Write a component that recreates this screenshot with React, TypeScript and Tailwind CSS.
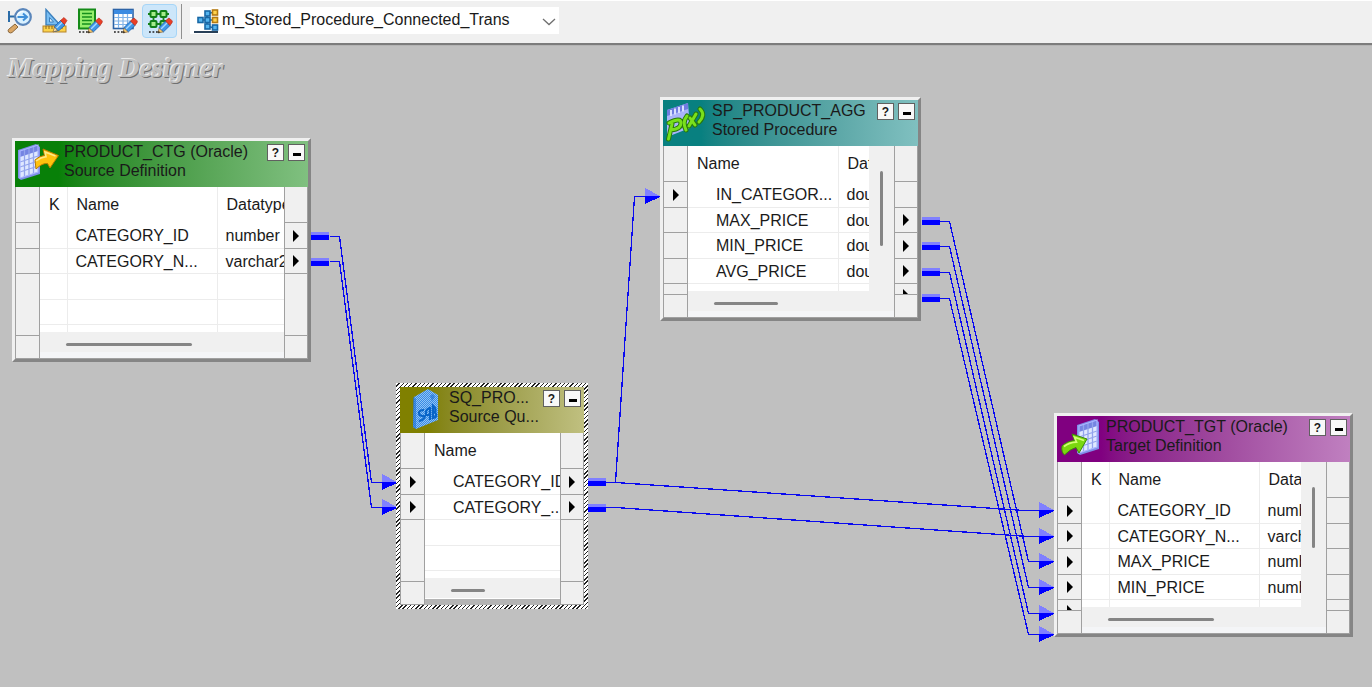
import type { ReactNode } from "react";

type Field = { name: string; type?: string; input?: boolean; output?: boolean };

type NodeProps = {
  title: string;
  kind: string;
  place: string;
  header: string;
  icon: ReactNode;
  fields: Field[];
  hasKey?: boolean;
  typeLabel?: string;
  selected?: boolean;
  indent?: boolean;
  scrollX: string;
  scrollY?: string;
  stubIn?: boolean;
  stubOut?: boolean;
};

function Pencil() {
  return (
    <g>
      <path d="M2 24h1.800M5.500 24h1.800M9 24h1.800" stroke="#222" strokeWidth="1.600" />
      <path d="M11 25l1.200-5.500 4.300 4.300z" fill="#f3c56b" stroke="#7a5320" strokeWidth=".6" />
      <path d="M11 25l.6-2.200 1.600 1.600z" fill="#222" />
      <path d="M12 19.500l6.500-6.500 4.500 4.500-6.500 6.300z" fill="#3f96e6" stroke="#1c5fae" strokeWidth=".8" />
      <path d="M14 21l6.500-6.500" stroke="#a6d6ff" strokeWidth="1.400" />
      <path d="M18.500 13l2.500-2.500q1-.8 2 .2l2 2q.8 1 0 2L23 17.500z" fill="#ea3f26" stroke="#a82315" strokeWidth=".6" />
    </g>
  );
}

function Svg({ children }: { children: ReactNode }) {
  return (
    <svg viewBox="0 0 26 26" className="size-[26px]" fill="none" aria-hidden="true">
      {children}
    </svg>
  );
}

const tools: { label: string; active?: boolean; icon: ReactNode }[] = [
  {
    label: "Source Analyzer",
    icon: (
      <Svg>
        <path d="M2 3v11M2 8.500h6" stroke="#2a6ca8" strokeWidth="2" />
        <path d="M1.500 21.500l6.500-5.500 3 3-6 5.500q-1.500 1-3.200-.2-1.300-1.500-.3-2.800z" fill="#dba766" stroke="#8a673c" strokeWidth="1" />
        <circle cx="16" cy="9" r="7.800" fill="#d9f1ff" stroke="#5a86bb" strokeWidth="2.200" />
        <path d="M9.500 8.500q2-5 7-5" stroke="#fff" strokeWidth="1.200" />
        <path d="M10.500 9h9M16 5.500L20 9l-4 3.500" stroke="#3f8fd8" strokeWidth="2" />
      </Svg>
    ),
  },
  {
    label: "Target Designer",
    icon: (
      <Svg>
        <path d="M4 1.500v15.500h14z" fill="#78bdf2" stroke="#3c80bd" strokeWidth="1.400" />
        <path d="M7.500 9.500v4.500h4z" fill="#e6f4ff" stroke="#3c80bd" />
        <rect x="1" y="18" width="23" height="6" fill="#fbd24a" stroke="#b5842a" />
        <path d="M4 18v3M7 18v3M10 18v3M20 18v3" stroke="#8b631d" />
        <g transform="translate(0 -1)">
          <path d="M12.500 19.500l6-6 4.500 4.500-6 5.500-4.500 1z" fill="#3f96e6" stroke="#1c5fae" strokeWidth=".8" />
          <path d="M14.500 21l6-6" stroke="#a6d6ff" strokeWidth="1.400" />
          <path d="M11 25l1.500-5 3 3.500z" fill="#f3dfae" stroke="#7a5320" strokeWidth=".6" />
          <path d="M18.500 13.500l3.500-3 3 3-2.500 4z" fill="#ea3f26" stroke="#a82315" strokeWidth=".6" />
        </g>
      </Svg>
    ),
  },
  {
    label: "Transformation Developer",
    icon: (
      <Svg>
        <rect x="2" y="1.500" width="16" height="19" fill="#96ee6c" stroke="#158b18" strokeWidth="2" />
        <path d="M5 5.500h10M5 9h10M5 12.500h10M5 16h9" stroke="#168f1c" strokeWidth="1.700" />
        <Pencil />
      </Svg>
    ),
  },
  {
    label: "Mapplet Designer",
    icon: (
      <Svg>
        <rect x="1.500" y="1.500" width="19.500" height="19" fill="#fff" stroke="#2d63a6" strokeWidth="1.600" />
        <path d="M2 2h18.500v4H2z" fill="#3b8be2" />
        <path d="M2 9.500h18M2 13h18M2 16.500h18M6.500 6v14M11 6v14M15.500 6v14" stroke="#82b4e8" strokeWidth="1.200" />
        <Pencil />
      </Svg>
    ),
  },
  {
    label: "Mapping Designer",
    active: true,
    icon: (
      <Svg>
        <path d="M1 6h21M1 16h21M6.500 6v12M16.500 5v12" stroke="#16831b" strokeWidth="1.800" />
        <g fill="#a5ec8a" stroke="#128018" strokeWidth="2">
          <rect x="3.500" y="3" width="6" height="6" rx="1" />
          <rect x="13.500" y="3" width="6" height="6" rx="1" />
          <rect x="3.500" y="13" width="6" height="6" rx="1" />
          <rect x="13.500" y="13" width="6" height="6" rx="1" />
        </g>
        <Pencil />
      </Svg>
    ),
  },
];

function SheetGrid() {
  return (
    <g>
      <path d="M3 9L21 3l4 3v27L6 39l-3-2z" fill="#7f8ee8" />
      <path d="M5 10l18-6v27L5 37z" fill="#dfe8ff" />
      <path d="M5 10l18-6v6L5 16z" fill="#7584e2" />
      <path d="M5 21l18-6M5 26l18-6M5 31l18-6M9.500 9v26.500M14 7v27M18.500 5.500V33" stroke="#93a4ec" strokeWidth="1.300" />
      <path d="M5 10l18-6v27L5 37z" fill="none" stroke="#a9b5ff" strokeWidth="1.200" />
    </g>
  );
}

const sourceIcon = (
  <svg viewBox="0 0 45 44" className="h-[44px] w-[45px]" aria-hidden="true">
    <SheetGrid />
    <path d="M20 19q4-4 9.500-4.500L28 8l15.500 6.500L35 27l-2.500-4.500Q27 22 21 28z" fill="#ffc20d" stroke="#b97a00" strokeWidth="1" />
    <path d="M21 20q5-4 10-4.300l-1-4.700 10.500 4" fill="none" stroke="#ffe987" strokeWidth="1.600" />
  </svg>
);

const targetIcon = (
  <svg viewBox="0 0 45 44" className="h-[44px] w-[45px]" aria-hidden="true">
    <g transform="translate(17 0)">
      <SheetGrid />
    </g>
    <path d="M5 30q5-5 12.500-5.500L15 18l15 5-8 14-3-5.500Q13 33 7.500 39 4 36 5 30z" fill="#7ad80f" stroke="#3c8a0a" strokeWidth="1" />
    <path d="M7 30.500q5-4 12.500-4.300l-2-5 9.500 3.300" fill="none" stroke="#d4ff76" strokeWidth="1.700" />
  </svg>
);

const procedureIcon = (
  <svg viewBox="0 0 45 44" className="h-[44px] w-[45px]" aria-hidden="true">
    <path d="M4 10l21-7 2 25-23 9z" fill="#a9b3fa" />
    <path d="M4 10l21-7v6L4 16z" fill="#6f7ce0" />
    <path d="M8 10v6M12 8.500v6M16 7v6M20 5.500v6" stroke="#d8dfff" strokeWidth="2" />
    <g fill="none" strokeLinecap="round" strokeLinejoin="round">
      <path
        d="M5.500 39L9 24M6 23q12-6 12 0 0 6-10 7M24 16q-5 6-1 14M37 9q6 6-1 13M27 18l5 7M33 14l-7 12"
        stroke="#27780c"
        strokeWidth="5"
      />
      <path
        d="M5.500 39L9 24M6 23q12-6 12 0 0 6-10 7M24 16q-5 6-1 14M37 9q6 6-1 13M27 18l5 7M33 14l-7 12"
        stroke="#79e01c"
        strokeWidth="3"
      />
    </g>
  </svg>
);

const qualifierIcon = (
  <svg viewBox="0 0 45 44" className="h-[44px] w-[45px]" aria-hidden="true">
    <defs>
      <pattern id="dither" width="2" height="2" patternUnits="userSpaceOnUse">
        <rect width="2" height="2" fill="#8fc4f6" />
        <rect width="1" height="1" fill="#3a8ae4" />
        <rect x="1" y="1" width="1" height="1" fill="#3a8ae4" />
      </pattern>
    </defs>
    <path d="M14 10L28 2l10 6v25L16 42l-3-2z" fill="url(#dither)" />
    <path d="M13 10l3 2v30l-3-2zM30 9l3-2 2 3-3 4z" fill="#1d72d4" opacity=".6" />
    <g fill="none" stroke="#0864c8" strokeWidth="2.200">
      <path d="M24 23q-5 0-5 3t4 3-1 4l-3 1M30 21q-5 1-4 7h4v-7zM30 20v13M33 19v12q4-1 3-4t-3-1q4-2 2-5-1-1-2-2z" />
    </g>
  </svg>
);

const triangle = "h-0 w-0 shrink-0 border-y-[6px] border-l-[6px] border-y-transparent border-l-black";

function Ports({ fields, side, stub }: { fields: Field[]; side: "in" | "out"; stub?: boolean }) {
  return (
    <div className="flex flex-col border-x border-[#a0a0a0] bg-[#f0f0f0]">
      <div className="h-[35px] shrink-0" />
      {fields.map((f) => (
        <div
          key={f.name}
          className="flex shrink-0 items-center justify-center border-t border-[#a0a0a0] even:h-[26px] odd:h-[25px]"
        >
          {(side === "in" ? f.input : f.output) && <span className={triangle} />}
        </div>
      ))}
      <div className="flex min-h-0 flex-1 items-start justify-center overflow-hidden border-t border-[#a0a0a0] pt-[5px]">
        {stub && <span className={triangle} />}
      </div>
      <div className="h-[24px] shrink-0 border-y border-[#a0a0a0]" />
    </div>
  );
}

function MappingNode(p: NodeProps) {
  const blanks = Math.max(0, 4 - p.fields.length);
  const rows: (Field | null)[] = [...p.fields, ...Array.from({ length: blanks }, () => null)];
  const line = "border-[#ececec]";
  return (
    <section
      aria-label={p.title}
      className={`absolute ${p.place} ${
        p.selected
          ? "bg-[repeating-linear-gradient(135deg,#fff_0px,#fff_2px,#222_2px,#222_3px)] p-[4px]"
          : "border-[3px] border-t-[#f0f0f0] border-r-[#858585] border-b-[#858585] border-l-[#f0f0f0]"
      }`}
    >
      <header className={`flex h-[46px] overflow-hidden bg-linear-to-r from-15% ${p.header}`}>
        <div className="w-[49px] shrink-0">{p.icon}</div>
        <div className="min-w-0 flex-1 pt-px leading-[19px] whitespace-nowrap">
          <h2>{p.title}</h2>
          <p>{p.kind}</p>
        </div>
        <div className="flex gap-[4px] pt-[3px] pr-[3px]">
          <button
            aria-label="Help"
            className="flex size-[17px] items-center justify-center border border-[#606060] bg-[#f8f8f8] text-[12px] leading-none font-bold"
          >
            ?
          </button>
          <button
            aria-label="Minimize"
            className="flex size-[17px] items-end justify-center border border-[#606060] bg-[#f8f8f8] pb-[4px]"
          >
            <span className="h-[3px] w-[8px] bg-black" />
          </button>
        </div>
      </header>
      <div className="grid grid-cols-[25px_minmax(0,1fr)_24px] grid-rows-[172px] bg-[#f0f0f0]">
        <Ports fields={p.fields} side="in" stub={p.stubIn} />
        <div className="flex min-w-0 flex-col">
          <div className="flex h-[145px] min-w-0">
            <div className="min-w-0 flex-1 overflow-hidden bg-white">
              <table className="w-[300px] table-fixed border-collapse text-left whitespace-nowrap">
                <thead>
                  <tr className="h-[35px]">
                    {p.hasKey && <th className={`w-[27px] border-r ${line} pl-[9px] font-normal`}>K</th>}
                    <th className={`${p.selected ? "" : "w-[150px] border-r"} ${line} pl-[9px] font-normal`}>Name</th>
                    {p.typeLabel && <th className="pl-[9px] font-normal">{p.typeLabel}</th>}
                  </tr>
                </thead>
                <tbody>
                  {rows.map((f, i) => (
                    <tr key={i} className={`border-b ${line} odd:h-[26px] even:h-[25px]`}>
                      {p.hasKey && <td className={`border-r ${line}`} />}
                      <td
                        className={`overflow-hidden ${p.selected ? "" : "border-r"} ${line} ${p.indent ? "pl-[28px]" : "pl-[8px]"} pt-[2px]`}
                      >
                        {f?.name}
                      </td>
                      {p.typeLabel && <td className="pt-[2px] pl-[8px]">{f?.type}</td>}
                    </tr>
                  ))}
                  <tr className="h-[25px]">
                    {p.hasKey && <td className={`border-r ${line}`} />}
                    <td className={`${p.selected ? "" : "border-r"} ${line}`} />
                    {p.typeLabel && <td />}
                  </tr>
                </tbody>
              </table>
            </div>
            {p.scrollY && (
              <div className="w-[25px] shrink-0 pt-[25px] pl-[11px]">
                <div className={`w-[3px] rounded-full bg-[#858585] ${p.scrollY}`} />
              </div>
            )}
          </div>
          <div className="h-[20px] pt-[11px] pl-[26px]">
            <div className={`h-[3px] rounded-full bg-[#858585] ${p.scrollX}`} />
          </div>
          <div
            className={`flex-1 ${p.selected ? "border-t border-white bg-[#b4b4b4]" : "border-b border-[#a0a0a0] bg-[#f4f5f7]"}`}
          />
        </div>
        <Ports fields={p.fields} side="out" stub={p.stubOut} />
      </div>
    </section>
  );
}

const links = [
  "M329 190H339L371 436H383",
  "M329 215H339L371 461H383",
  "M605 436H615L634 150H645",
  "M605 436H615L1024 464H1040",
  "M605 461H615L1028 490H1040",
  "M939 175H949L1028 515H1040",
  "M939 200H949L1028 541H1040",
  "M939 226H949L1028 567H1040",
  "M939 252H949L1028 588H1040",
];
const stubs = [
  [311, 190],
  [311, 216],
  [588, 436],
  [588, 462],
  [922, 175],
  [922, 200],
  [922, 226],
  [922, 252],
];
const arrows = [
  [382, 436],
  [382, 461],
  [645, 150],
  [1039, 464],
  [1039, 490],
  [1039, 515],
  [1039, 541],
  [1039, 567],
  [1039, 588],
];

function Links() {
  return (
    <svg className="absolute inset-0 h-full w-full" shapeRendering="crispEdges" aria-hidden="true">
      {links.map((d) => (
        <path key={d} d={d} transform="translate(.5 .5)" fill="none" stroke="#0a0af0" strokeWidth="1.300" />
      ))}
      {stubs.map(([x, y]) => (
        <g key={`${x}-${y}`}>
          <rect x={x} y={y - 4} width="18" height="3" fill="#8080ff" />
          <rect x={x} y={y - 1} width="18" height="5" fill="#0000ff" />
        </g>
      ))}
      {arrows.map(([x, y]) => (
        <g key={`${x}-${y}`}>
          <path d={`M${x} ${y - 8}v8h15z`} fill="#8080ff" />
          <path d={`M${x} ${y}v8l15-7v-1z`} fill="#0000ff" />
        </g>
      ))}
    </svg>
  );
}

export default function App() {
  return (
    <div className="flex min-h-screen flex-col bg-[#c0c0c0] font-['Liberation_Sans',Arial,sans-serif] text-[16px] leading-[20px] text-[#1a1a1a]">
      <div
        role="toolbar"
        aria-label="Designer tools"
        className="flex h-[45px] items-start border-t border-b-2 border-t-white border-b-[#7c7c7c] bg-[#f0f0f0] pt-[3px] pl-[2px]"
      >
        <div className="flex">
          {tools.map((t) => (
            <button
              key={t.label}
              aria-label={t.label}
              aria-pressed={!!t.active}
              className={`flex h-[34px] w-[35px] items-center justify-center rounded-[4px] border ${
                t.active ? "border-[#a6d5f7] bg-[#cce6fa]" : "border-transparent"
              }`}
            >
              {t.icon}
            </button>
          ))}
        </div>
        <div className="mr-[8px] ml-[4px] h-[35px] w-px bg-[#909090]" />
        <div className="relative mt-[3px] h-[27px] w-[369px]">
          <select
            aria-label="Mapping"
            className="h-full w-full appearance-none bg-white pb-[2px] pl-[32px] text-[16px] leading-[20px] outline-none"
          >
            <option>m_Stored_Procedure_Connected_Trans</option>
          </select>
          <svg
            viewBox="0 0 26 26"
            className="pointer-events-none absolute top-[1px] left-[4px] size-[26px]"
            fill="none"
            aria-hidden="true"
          >
            <path d="M4 12h16M13 6v13M13 6l7-2M13 18l7 2" stroke="#236a9e" strokeWidth="1.600" />
            <path d="M0 24h24" stroke="#102a44" strokeWidth="1.800" />
            <g fill="#54b4ee" stroke="#1767a5" strokeWidth="1.600">
              <rect x="4" y="9.500" width="5" height="5" />
              <rect x="11" y="3" width="5" height="5" />
              <rect x="11" y="9.500" width="5" height="5" />
              <rect x="11" y="16" width="5" height="5" />
              <rect x="18.500" y="17" width="5" height="5" />
            </g>
            <g fill="#ffd34d" stroke="#b37a12" strokeWidth="1.600">
              <rect x="18.500" y="2" width="5" height="5" />
              <rect x="18.500" y="9.500" width="5" height="5" />
            </g>
          </svg>
          <svg
            viewBox="0 0 14 8"
            className="pointer-events-none absolute top-[11px] right-[3px] h-[8px] w-[14px]"
            fill="none"
            aria-hidden="true"
          >
            <path d="M1 1l6 5.500L13 1" stroke="#707070" strokeWidth="1.300" />
          </svg>
        </div>
      </div>
      <main className="relative min-h-[642px] flex-1 overflow-x-auto overflow-y-hidden border-t border-[#b4b4b4]">
        <h1 className="px-[8px] pt-[6px] font-['Liberation_Serif','Times_New_Roman',serif] text-[28px] leading-[32px] font-bold text-[#c0c0c0] italic [text-shadow:-1px_-1px_0_#ececec,1px_1px_0_#707070]">
          Mapping Designer
        </h1>
        <Links />
        <MappingNode
          title="PRODUCT_CTG (Oracle)"
          kind="Source Definition"
          place="left-[12px] top-[92px] w-[299px]"
          header="from-[#088008] to-[#80c080]"
          icon={sourceIcon}
          hasKey
          typeLabel="Datatype"
          scrollX="w-[126px]"
          fields={[
            { name: "CATEGORY_ID", type: "number", output: true },
            { name: "CATEGORY_N...", type: "varchar2", output: true },
          ]}
        />
        <MappingNode
          title="SQ_PRO..."
          kind="Source Qu..."
          place="left-[396px] top-[337px] w-[192px]"
          header="from-[#808000] to-[#c0c080]"
          icon={qualifierIcon}
          selected
          indent
          scrollX="w-[34px]"
          fields={[
            { name: "CATEGORY_ID", input: true, output: true },
            { name: "CATEGORY_...", input: true, output: true },
          ]}
        />
        <MappingNode
          title="SP_PRODUCT_AGG"
          kind="Stored Procedure"
          place="left-[660px] top-[51px] w-[261px]"
          header="from-[#088080] to-[#80c0c0]"
          icon={procedureIcon}
          indent
          typeLabel="Datatype"
          scrollX="w-[64px]"
          scrollY="h-[75px]"
          stubOut
          fields={[
            { name: "IN_CATEGOR...", type: "double", input: true },
            { name: "MAX_PRICE", type: "double", output: true },
            { name: "MIN_PRICE", type: "double", output: true },
            { name: "AVG_PRICE", type: "double", output: true },
          ]}
        />
        <MappingNode
          title="PRODUCT_TGT (Oracle)"
          kind="Target Definition"
          place="left-[1054px] top-[367px] w-[299px]"
          header="from-[#800080] to-[#c080c0]"
          icon={targetIcon}
          hasKey
          typeLabel="Datatype"
          scrollX="w-[106px]"
          scrollY="h-[61px]"
          stubIn
          fields={[
            { name: "CATEGORY_ID", type: "number", input: true },
            { name: "CATEGORY_N...", type: "varchar2", input: true },
            { name: "MAX_PRICE", type: "number", input: true },
            { name: "MIN_PRICE", type: "number", input: true },
          ]}
        />
      </main>
    </div>
  );
}
